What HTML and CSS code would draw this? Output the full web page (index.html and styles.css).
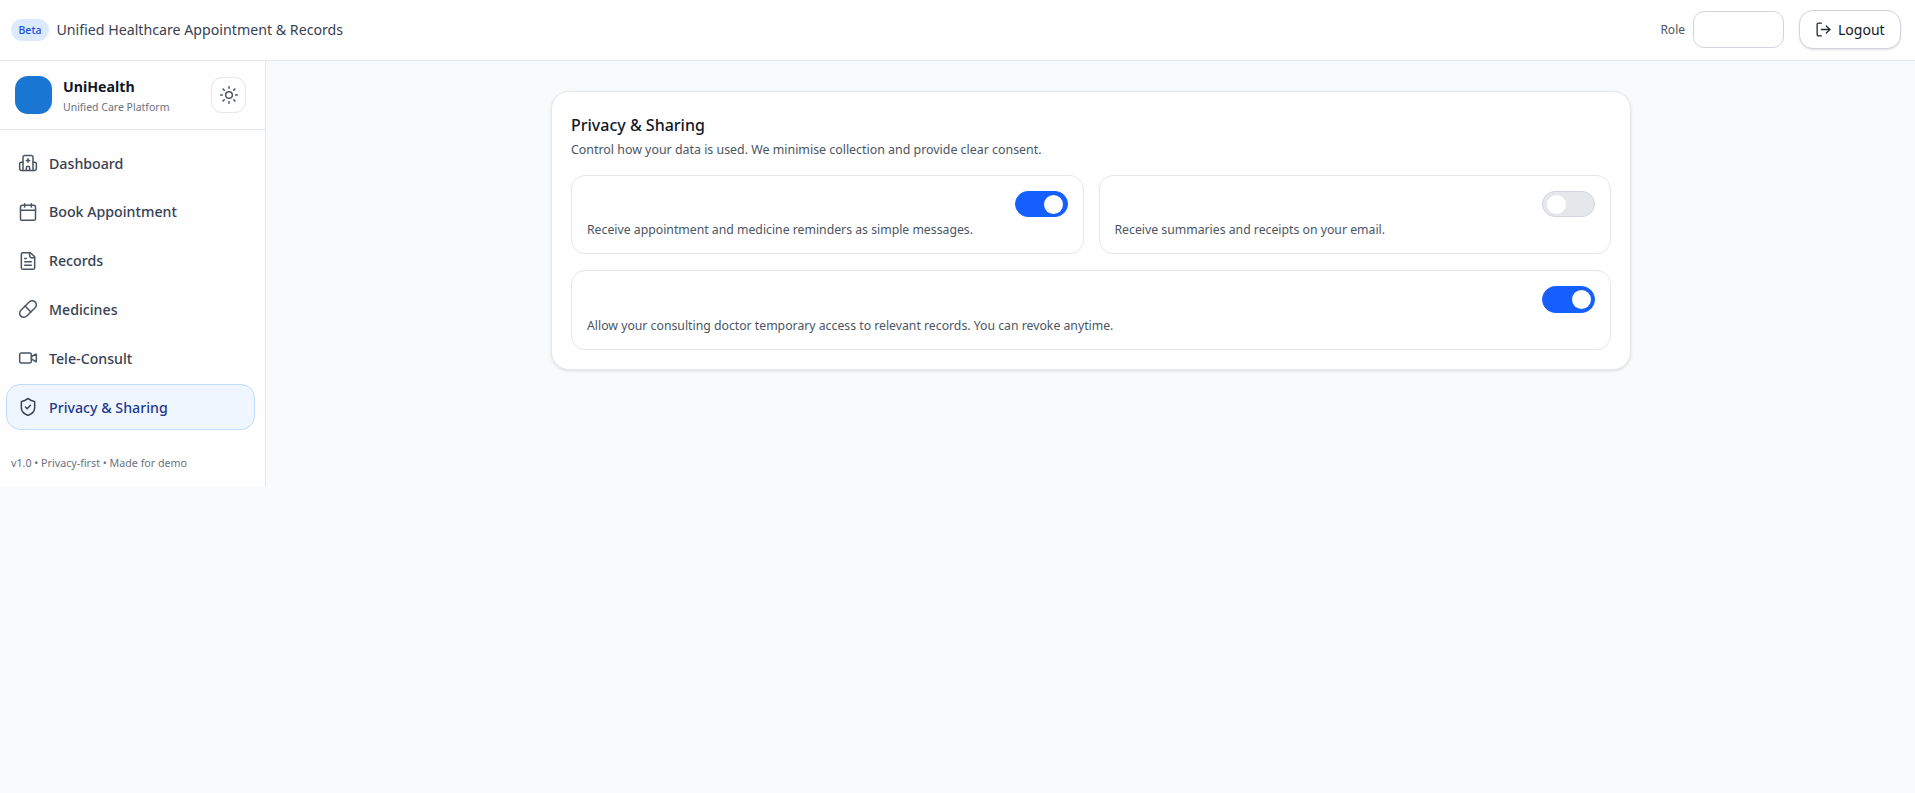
FILE: index.html
```html
<!DOCTYPE html>
<html>
<head>
    <title>UniHealth</title>
    <link rel="stylesheet" href="styles.css">
</head>
<body>
    <header class="topbar">
        <div class="topbar-left">
            <span class="badge">Beta</span>
            <span class="app-title">Unified Healthcare Appointment &amp; Records</span>
        </div>
        <div class="topbar-right">
            <label class="role-label">Role</label>
            <div class="role-select"></div>
            <button class="logout">
                <svg class="icon" viewBox="0 0 24 24"><path d="m16 17 5-5-5-5"/><path d="M21 12H9"/><path d="M9 21H5a2 2 0 0 1-2-2V5a2 2 0 0 1 2-2h4"/></svg>
                Logout
            </button>
        </div>
    </header>
    <div class="shell">
        <aside class="sidebar">
            <div class="brand">
                <div class="logo"></div>
                <div class="brand-text">
                    <div class="brand-name">UniHealth</div>
                    <div class="brand-sub">Unified Care Platform</div>
                </div>
                <button class="theme-btn">
                    <svg class="icon" viewBox="0 0 24 24"><circle cx="12" cy="12" r="4"/><path d="M12 2v2"/><path d="M12 20v2"/><path d="m4.93 4.93 1.41 1.41"/><path d="m17.66 17.66 1.41 1.41"/><path d="M2 12h2"/><path d="M20 12h2"/><path d="m6.34 17.66-1.41 1.41"/><path d="m19.07 4.93-1.41 1.41"/></svg>
                </button>
            </div>
            <nav class="nav">
                <a class="nav-item">
                    <svg class="icon" viewBox="0 0 24 24"><path d="M12 7v4"/><path d="M14 21v-3a2 2 0 0 0-4 0v3"/><path d="M14 9h-4"/><path d="M18 11h2a2 2 0 0 1 2 2v6a2 2 0 0 1-2 2H4a2 2 0 0 1-2-2v-6a2 2 0 0 1 2-2h2"/><path d="M18 21V5a2 2 0 0 0-2-2H8a2 2 0 0 0-2 2v16"/></svg>
                    Dashboard
                </a>
                <a class="nav-item">
                    <svg class="icon" viewBox="0 0 24 24"><path d="M8 2v4"/><path d="M16 2v4"/><rect width="18" height="18" x="3" y="4" rx="2"/><path d="M3 10h18"/></svg>
                    Book Appointment
                </a>
                <a class="nav-item">
                    <svg class="icon" viewBox="0 0 24 24"><path d="M15 2H6a2 2 0 0 0-2 2v16a2 2 0 0 0 2 2h12a2 2 0 0 0 2-2V7Z"/><path d="M14 2v4a2 2 0 0 0 2 2h4"/><path d="M10 9H8"/><path d="M16 13H8"/><path d="M16 17H8"/></svg>
                    Records
                </a>
                <a class="nav-item">
                    <svg class="icon" viewBox="0 0 24 24"><path d="m10.5 20.5 10-10a4.95 4.95 0 1 0-7-7l-10 10a4.95 4.95 0 1 0 7 7Z"/><path d="m8.5 8.5 7 7"/></svg>
                    Medicines
                </a>
                <a class="nav-item">
                    <svg class="icon" viewBox="0 0 24 24"><path d="m16 13 5.223 3.482a.5.5 0 0 0 .777-.416V7.87a.5.5 0 0 0-.752-.432L16 10.5"/><rect x="2" y="6" width="14" height="12" rx="2"/></svg>
                    Tele-Consult
                </a>
                <a class="nav-item active">
                    <svg class="icon" viewBox="0 0 24 24"><path d="M20 13c0 5-3.5 7.5-7.66 8.95a1 1 0 0 1-.67-.01C7.5 20.5 4 18 4 13V6a1 1 0 0 1 1-1c2 0 4.5-1.2 6.24-2.72a1.17 1.17 0 0 1 1.52 0C14.51 3.81 17 5 19 5a1 1 0 0 1 1 1z"/><path d="m9 12 2 2 4-4"/></svg>
                    Privacy &amp; Sharing
                </a>
            </nav>
            <div class="sidebar-foot">v1.0 • Privacy-first • Made for demo</div>
        </aside>
        <main class="main">
            <section class="card">
                <h2 class="card-title">Privacy &amp; Sharing</h2>
                <p class="card-sub">Control how your data is used. We minimise collection and provide clear consent.</p>
                <div class="options">
                    <div class="option">
                        <div class="option-head"><span class="toggle on"></span></div>
                        <p class="option-text">Receive appointment and medicine reminders as simple messages.</p>
                    </div>
                    <div class="option">
                        <div class="option-head"><span class="toggle"></span></div>
                        <p class="option-text">Receive summaries and receipts on your email.</p>
                    </div>
                    <div class="option wide">
                        <div class="option-head"><span class="toggle on"></span></div>
                        <p class="option-text">Allow your consulting doctor temporary access to relevant records. You can revoke anytime.</p>
                    </div>
                </div>
            </section>
        </main>
    </div>
</body>
</html>
```

FILE: styles.css
```css
* {
  box-sizing: border-box;
}
body {
  margin: 0;
  min-height: 793px;
  background-color: #f9fafc;
  color: #111827;
  font-family: "Noto Sans", "Liberation Sans", sans-serif;
}
.icon {
  width: 20px;
  height: 20px;
  flex: none;
  fill: none;
  stroke: #4b5563;
  stroke-width: 1.8;
  stroke-linecap: round;
  stroke-linejoin: round;
}

/* top bar */
.topbar {
  display: flex;
  align-items: center;
  justify-content: space-between;
  height: 61px;
  padding: 0 14px 1px 11px;
  background-color: #fff;
  border-bottom: 1px solid #e5e7eb;
}
.topbar-left, .topbar-right {
  display: flex;
  align-items: center;
}
.badge {
  padding: 3px 7.5px;
  border-radius: 999px;
  background-color: #dbeafe;
  color: #1d4ed8;
  font-size: 10.5px;
  line-height: 16px;
  font-weight: 500;
}
.app-title {
  margin-left: 7.5px;
  font-size: 14.2px;
  color: #374151;
}
.role-label {
  font-size: 12px;
  color: #4b5563;
}
.role-select {
  width: 91px;
  height: 37px;
  margin-left: 8px;
  border: 1px solid #d1d5db;
  border-radius: 11px;
  background-color: #fff;
}
.logout {
  display: flex;
  align-items: center;
  gap: 6px;
  width: 102px;
  height: 39px;
  margin: 0 0 1px 15px;
  padding: 0 0 0 15px;
  border: 1px solid #d1d5db;
  border-radius: 14px;
  background-color: #fff;
  box-shadow: 0 1px 2px rgba(0, 0, 0, 0.12);
  color: #111827;
  font: inherit;
  font-size: 14px;
}
.logout .icon {
  width: 17px;
  height: 17px;
  stroke: #1f2937;
}

/* sidebar */
.shell {
  display: flex;
  align-items: flex-start;
}
.sidebar {
  width: 266px;
  height: 425px;
  flex: none;
  background-color: #fefefe;
  border-right: 1px solid #e5e7eb;
}
.brand {
  display: flex;
  align-items: center;
  height: 69px;
  padding: 0 19px 0 15px;
  border-bottom: 1px solid #e5e7eb;
}
.logo {
  width: 37px;
  height: 38px;
  border-radius: 13px;
  background-color: #1976d2;
}
.brand-text {
  flex: 1;
  margin-left: 11px;
  padding-top: 2px;
}
.brand-name {
  font-size: 14.2px;
  line-height: 20px;
  font-weight: 700;
}
.brand-sub {
  margin-top: 1.5px;
  font-size: 10.5px;
  line-height: 16px;
  color: #6b7280;
}
.theme-btn {
  display: flex;
  align-items: center;
  justify-content: center;
  width: 35px;
  height: 36px;
  padding: 0;
  border: 1px solid #e5e7eb;
  border-radius: 11px;
  background-color: #fff;
}
.nav {
  display: flex;
  flex-direction: column;
  gap: 2px;
  padding: 9.7px 10px 0 6px;
}
.nav-item {
  display: flex;
  align-items: center;
  gap: 11px;
  height: 46.8px;
  padding: 0 11px;
  border: 1px solid transparent;
  border-radius: 14px;
  color: #374151;
  font-size: 14.2px;
  font-weight: 500;
}
.nav-item.active {
  background-color: #eff6ff;
  border-color: #bfdbfe;
  color: #1e3a8a;
}
.nav-item.active .icon {
  stroke: #374151;
}
.sidebar-foot {
  margin-top: 25px;
  padding-left: 11px;
  font-size: 10.7px;
  line-height: 16px;
  color: #6b7280;
}

/* content */
.main {
  flex: 1;
  display: flex;
  justify-content: center;
  padding: 30px 0 0 1px;
}
.card {
  width: 1080px;
  padding: 21px 19px 19px;
  background-color: #fff;
  border: 1px solid #e5e7eb;
  border-radius: 18px;
  box-shadow: 0 1px 3px rgba(0, 0, 0, 0.12);
}
.card-title {
  margin: 0;
  font-size: 16px;
  line-height: 24px;
  font-weight: 500;
  color: #111827;
}
.card-sub {
  margin: 3px 0 15px;
  font-size: 12.4px;
  line-height: 20px;
  color: #4b5563;
}
.options {
  display: grid;
  grid-template-columns: 1fr 1fr;
  gap: 16px 15px;
}
.option {
  height: 79px;
  padding: 15px 15px 0;
  border: 1px solid #e5e7eb;
  border-radius: 14px;
}
.option.wide {
  grid-column: span 2;
  height: 80px;
}
.option-head {
  display: flex;
  justify-content: flex-end;
}
.option-text {
  margin: 3.5px 0 0;
  font-size: 12.25px;
  line-height: 18px;
  color: #4b5563;
}
.toggle {
  display: flex;
  align-items: center;
  width: 53px;
  height: 26px;
  padding: 0 3.5px;
  border: 1px solid #d1d5db;
  border-radius: 999px;
  background-color: #e5e7eb;
}
.toggle::before {
  content: "";
  width: 19px;
  height: 19px;
  border-radius: 50%;
  background-color: #fff;
}
.toggle.on {
  justify-content: flex-end;
  background-color: #165fff;
  border-color: #165fff;
}
.wide .toggle {
  height: 27px;
}
```
